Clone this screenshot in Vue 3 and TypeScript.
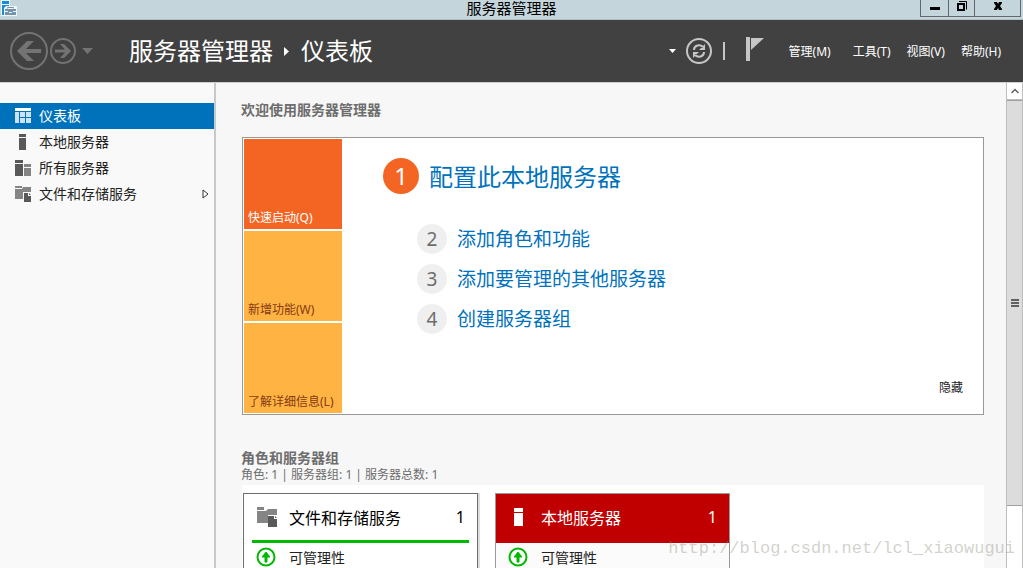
<script setup lang="ts">
import { ref } from 'vue'

interface NavItem {
  id: string
  label: string
  expandable?: boolean
}

const navItems: NavItem[] = [
  { id: 'dashboard', label: '仪表板' },
  { id: 'local', label: '本地服务器' },
  { id: 'all', label: '所有服务器' },
  { id: 'storage', label: '文件和存储服务', expandable: true },
]
const current = ref('dashboard')

const menus = ['管理(M)', '工具(T)', '视图(V)', '帮助(H)']

const tiles = ['快速启动(Q)', '新增功能(W)', '了解详细信息(L)']
const activeTile = ref(0)

const steps = ['配置此本地服务器', '添加角色和功能', '添加要管理的其他服务器', '创建服务器组']
const welcomeVisible = ref(true)

const groups = [
  { id: 'storage', name: '文件和存储服务', count: 1, alert: false },
  { id: 'local', name: '本地服务器', count: 1, alert: true },
]
</script>

<template>
  <div class="window">
    <div class="titlebar">
      <svg class="app-icon" width="18" height="18" viewBox="0 0 18 18" aria-hidden="true">
        <path d="M1 0h9v6h7v10H1z" fill="#eef6fa" />
        <path d="M2 1h7v3H2zM2 5h7v1H6L4 8v7H2z" fill="#1e8bd8" />
        <path d="M5 9h11v6H5z" fill="#7593aa" />
        <path d="M7.500 8.500v-1h6v1" fill="none" stroke="#7593aa" />
        <path d="M5 11.500h3M9 12.500h3M13 11.500h3" fill="none" stroke="#eef6fa" />
      </svg>
      <span class="window-title">服务器管理器</span>
      <div class="window-buttons">
        <button class="wb-min" type="button" aria-label="最小化">
          <svg width="12" height="14" viewBox="0 0 12 14"><path d="M1 7h10v3H1z" /></svg>
        </button>
        <button class="wb-max" type="button" aria-label="还原">
          <svg width="12" height="14" viewBox="0 0 12 14">
            <path d="M2 4h6v6H2z" fill="none" stroke="#000" stroke-width="2" />
            <path d="M3 1.500h7.500v8" fill="none" stroke="#000" />
          </svg>
        </button>
        <button class="wb-close" type="button" aria-label="关闭">
          <svg width="12" height="14" viewBox="0 0 12 14">
            <path d="M2 2h3l1 2 1-2h3v1L8 6l2 3v1H7L6 8l-1 2H2V9l2-3-2-3z" />
          </svg>
        </button>
      </div>
    </div>

    <header class="header">
      <button class="icon-button" type="button" aria-label="后退">
        <svg width="38" height="38" viewBox="0 0 38 38">
          <circle cx="19" cy="19" r="18" fill="none" stroke="#737373" stroke-width="2" />
          <path d="M7 19L17 9h7l-8 8h15v4H16l8 8h-7z" fill="#737373" />
        </svg>
      </button>
      <button class="icon-button forward" type="button" aria-label="前进">
        <svg width="26" height="26" viewBox="0 0 26 26">
          <circle cx="13" cy="13" r="12" fill="none" stroke="#737373" stroke-width="2" />
          <path d="M21 13l-7-7h-4l5 5.500H5v3h10L10 20h4z" fill="#737373" />
        </svg>
      </button>
      <button class="icon-button history" type="button" aria-label="历史记录">
        <svg width="11" height="7" viewBox="0 0 11 7"><path d="M0 0h11L5.500 6z" fill="#737373" /></svg>
      </button>
      <h1 class="crumbs">
        <span>服务器管理器</span>
        <svg width="6" height="9" viewBox="0 0 6 9" aria-hidden="true"><path d="M0 0l5 4.500L0 9z" fill="#fff" /></svg>
        <span>仪表板</span>
      </h1>
      <div class="tools">
        <button class="icon-button" type="button" aria-label="刷新选项">
          <svg width="7" height="4" viewBox="0 0 7 4"><path d="M0 0h7L3.500 4z" fill="#fff" /></svg>
        </button>
        <button class="icon-button refresh" type="button" aria-label="刷新">
          <svg width="26" height="26" viewBox="0 0 26 26">
            <circle cx="13" cy="13" r="12" fill="none" stroke="#c6c6c6" stroke-width="2" />
            <path d="M8 12c0-5 6-6 9-3M18 14c0 5-6 6-9 3" fill="none" stroke="#c6c6c6" stroke-width="2" />
            <path d="M19 6v6h-6l2-2h2V8zM7 20v-6h6l-2 2H9v2z" fill="#c6c6c6" />
          </svg>
        </button>
        <span class="divider"></span>
        <button class="icon-button flag" type="button" aria-label="通知">
          <svg width="18" height="24" viewBox="0 0 18 24">
            <path d="M0 0h4v24H0z" fill="#c6c6c6" />
            <path d="M5 1h13L5 13z" fill="#c6c6c6" />
          </svg>
        </button>
        <nav class="menus">
          <button v-for="menu in menus" :key="menu" type="button">{{ menu }}</button>
        </nav>
      </div>
    </header>

    <div class="body">
      <nav class="sidebar">
        <button
          v-for="item in navItems"
          :key="item.id"
          type="button"
          class="nav-item"
          :class="{ selected: item.id === current }"
          @click="current = item.id"
        >
          <svg width="16" height="16" viewBox="0 0 16 16" aria-hidden="true">
            <template v-if="item.id === 'dashboard'">
              <path d="M0 0h16v3H0z" fill="#fff" />
              <path d="M0 4h4v11H0zM5 4h5v5H5zM11 4h5v5h-5zM5 10h5v5H5zM11 10h5v5h-5z" fill="#cce3f5" />
            </template>
            <path v-else-if="item.id === 'local'" d="M4 0h7v3H4zM4 4h7v12H4z" fill="#595959" />
            <template v-else-if="item.id === 'all'">
              <path d="M0 0h8v3H0zM0 4h8v12H0z" fill="#595959" />
              <path d="M9 4h7v3H9zM9 8h7v8H9z" fill="#858585" />
            </template>
            <template v-else>
              <path d="M0 0h7v2H0zM0 3h7l1-2h8v5H8v7H0z" fill="#858585" />
              <path d="M9 7h4v3h3v6H9z" fill="#595959" />
              <path d="M14 7l2 2h-2z" fill="#595959" />
            </template>
          </svg>
          <span>{{ item.label }}</span>
          <svg v-if="item.expandable" class="expand" width="7" height="10" viewBox="0 0 7 10" aria-hidden="true">
            <path d="M1 1l5 4-5 4z" fill="#fff" stroke="#333" />
          </svg>
        </button>
      </nav>

      <main class="content">
        <h2>欢迎使用服务器管理器</h2>
        <section v-if="welcomeVisible" class="welcome">
          <div class="tiles">
            <button
              v-for="(tile, index) in tiles"
              :key="tile"
              type="button"
              class="tile"
              :class="{ active: index === activeTile }"
              @click="activeTile = index"
            >
              {{ tile }}
            </button>
          </div>
          <ol class="steps">
            <li v-for="(step, index) in steps" :key="step">
              <span class="number">{{ index + 1 }}</span>
              <a href="#">{{ step }}</a>
            </li>
          </ol>
          <button class="hide" type="button" @click="welcomeVisible = false">隐藏</button>
        </section>

        <h2 class="groups-title">角色和服务器组</h2>
        <p class="summary">角色: 1 | 服务器组: 1 | 服务器总数: 1</p>
        <section class="groups">
          <article v-for="group in groups" :key="group.id" class="card" :class="{ alert: group.alert }">
            <header class="card-head">
              <svg v-if="group.alert" width="22" height="20" viewBox="0 0 22 20" aria-hidden="true">
                <path d="M6 1h9v4H6zM6 6h9v13H6z" fill="#fff" />
              </svg>
              <svg v-else width="22" height="20" viewBox="0 0 22 20" aria-hidden="true">
                <path d="M1 0h7v3H1zM1 4h9l2-2h9v6h-9v8H1z" fill="#858585" />
                <path d="M12 9h6v3h3v8h-9z" fill="#595959" />
                <path d="M19 9l2 2h-2z" fill="#595959" />
              </svg>
              <h3>{{ group.name }}</h3>
              <span>{{ group.count }}</span>
            </header>
            <a class="card-row" href="#">
              <svg width="20" height="20" viewBox="0 0 20 20" aria-hidden="true">
                <circle cx="10" cy="10" r="8.500" fill="#fff" stroke="#00b900" stroke-width="2" />
                <path d="M10 5l4 5h-3v5H9v-5H6z" fill="#00b900" stroke="#00b900" />
              </svg>
              <span>可管理性</span>
            </a>
          </article>
        </section>
      </main>

      <div class="scrollbar" aria-hidden="true">
        <div class="scroll-up">
          <svg width="8" height="6" viewBox="0 0 8 6"><path d="M0.500 5L4 1.500 7.500 5" fill="none" stroke="#606060" stroke-width="1.500" /></svg>
        </div>
        <div class="thumb">
          <svg width="8" height="8" viewBox="0 0 8 8"><path d="M0 0h8v2H0zM0 3h8v2H0zM0 6h8v2H0z" fill="#606060" /></svg>
        </div>
        <div class="track"></div>
      </div>
    </div>
    <span class="watermark">http://blog.csdn.net/lcl_xiaowugui</span>
  </div>
</template>

<style>
body {
  margin: 0;
  overflow: hidden;
}
</style>

<style scoped>
.window {
  position: relative;
  display: flex;
  flex-direction: column;
  height: 100vh;
  overflow: hidden;
  background: #f7f7f7;
  color: #222;
  font-family: "Noto Sans", "Noto Sans CJK SC", sans-serif;
  font-size: 14px;
}
button {
  margin: 0;
  padding: 0;
  border: 0;
  background: none;
  color: inherit;
  font: inherit;
  text-align: left;
}
a {
  text-decoration: none;
}
h1, h2, h3, p, ol {
  margin: 0;
  padding: 0;
}
svg {
  display: block;
  flex: none;
}
.titlebar {
  display: grid;
  grid-template-columns: 1fr auto 1fr;
  box-sizing: border-box;
  height: 20px;
  flex: none;
  border-bottom: 1px solid #aebdc3;
  background: #c4d6dc;
}
.window-title {
  color: #000;
  font-family: "Liberation Sans", "Noto Sans CJK SC", sans-serif;
  font-size: 15px;
  line-height: 18px;
}
.window-buttons {
  display: flex;
  justify-self: end;
  box-sizing: border-box;
  height: 17px;
  margin-right: 2px;
  border: solid #65656d;
  border-width: 0 1px 1px;
}
.window-buttons button {
  display: flex;
  justify-content: center;
  width: 27px;
}
.window-buttons .wb-max {
  border: solid #65656d;
  border-width: 0 1px;
}
.window-buttons .wb-close {
  width: 45px;
}
.header {
  display: flex;
  align-items: center;
  box-sizing: border-box;
  height: 63px;
  flex: none;
  padding: 0 22px 0 10px;
  border-bottom: 1px solid #cfcfcf;
  background: #414141;
  color: #fff;
}
.forward {
  margin-left: 2px;
}
.history {
  margin-left: 6px;
}
.crumbs {
  display: flex;
  align-items: center;
  gap: 11px;
  margin-left: 36px;
  font-size: 24px;
  font-weight: 400;
  line-height: 32px;
}
.tools {
  display: flex;
  align-items: center;
  margin-left: auto;
}
.refresh {
  margin-left: 10px;
}
.divider {
  width: 2px;
  height: 18px;
  margin-left: 11px;
  background: #c6c6c6;
}
.flag {
  margin: 0 25px 4px 21px;
}
.menus {
  display: flex;
  gap: 16px;
  padding-top: 2px;
  font-size: 12px;
  line-height: 18px;
}
.menus button:first-child {
  margin-right: 6px;
}
.body {
  display: flex;
  flex: 1;
  min-height: 0;
}
.sidebar {
  width: 214px;
  flex: none;
  padding-top: 20px;
  border-right: 2px solid #c9c9c9;
  background: #f9f9f9;
}
.nav-item {
  display: flex;
  align-items: center;
  gap: 8px;
  width: 100%;
  height: 26px;
  padding: 0 5px 0 15px;
}
.nav-item span {
  padding-bottom: 2px;
}
.nav-item.selected {
  background: #0072bc;
  color: #fff;
}
.expand {
  margin-left: auto;
}
.content {
  flex: 1;
  min-width: 0;
  overflow: hidden;
  padding: 17px 22px 0 25px;
}
h2 {
  color: #6d6d6d;
  font-size: 14px;
  font-weight: 600;
  line-height: 20px;
}
.welcome {
  display: flex;
  margin: 17px 0 0 1px;
  padding: 1px;
  border: 1px solid #999;
  background: #fff;
}
.tiles {
  display: flex;
  flex-direction: column;
  gap: 2px;
  width: 98px;
}
.tile {
  display: flex;
  align-items: flex-end;
  box-sizing: border-box;
  height: 90px;
  padding: 0 4px 2px;
  background: #ffb343;
  color: #853a12;
  font-size: 12px;
  line-height: 18px;
  white-space: nowrap;
}
.tile.active {
  background: #f46524;
  color: #fff;
}
.steps {
  margin: 19px 0 0 75px;
  list-style: none;
}
.steps li {
  display: flex;
  align-items: center;
  gap: 10px;
  height: 30px;
  margin-bottom: 10px;
  font-size: 19px;
}
.steps li:first-child {
  height: 36px;
  margin: 0 0 30px -34px;
  font-size: 24px;
}
.steps a {
  padding-bottom: 2px;
  color: #0072bc;
}
.number {
  display: flex;
  align-items: center;
  justify-content: center;
  width: 30px;
  height: 30px;
  border-radius: 50%;
  background: #efefef;
  color: #6d6d6d;
}
li:first-child .number {
  box-sizing: border-box;
  width: 36px;
  height: 36px;
  padding-bottom: 2px;
  background: #f46524;
  color: #fff;
}
.hide {
  align-self: flex-end;
  margin: 0 19px 16px auto;
  font-size: 12px;
  line-height: 18px;
}
.groups-title {
  margin-top: 33px;
}
.summary {
  color: #6d6d6d;
  font-size: 12px;
  line-height: 14px;
}
.groups {
  display: flex;
  gap: 17px;
  margin: 3px 0 0 1px;
  padding: 8px 1px;
  background: #fff;
}
.card {
  box-sizing: border-box;
  width: 235px;
  height: 190px;
  border: 1px solid #6d6d6d;
  background: #fff;
  box-shadow: 2px 0 0 #ddd;
}
.card.alert {
  border-color: #999;
  background: #fbfbfb;
  box-shadow: none;
}
.card-head {
  display: flex;
  align-items: center;
  gap: 11px;
  box-sizing: border-box;
  height: 49px;
  margin: 0 8px;
  padding: 0 4px;
  border-bottom: 3px solid #00b900;
  color: #000;
  font-size: 16px;
}
.card.alert .card-head {
  margin: 0;
  padding: 0 12px;
  border-bottom-color: #c00000;
  background: #c00000;
  color: #fff;
}
.card-head h3 {
  flex: 1;
  font-size: 16px;
  font-weight: 400;
}
.card-row {
  display: flex;
  align-items: center;
  gap: 13px;
  height: 28px;
  padding-left: 12px;
  color: #222;
}
.scrollbar {
  display: flex;
  flex-direction: column;
  box-sizing: border-box;
  width: 17px;
  flex: none;
  border: solid #bdbdbd;
  border-width: 0 1px;
  background: #fff;
}
.scroll-up {
  display: flex;
  align-items: center;
  justify-content: center;
  height: 16px;
  border-bottom: 1px solid #bdbdbd;
}
.thumb {
  display: flex;
  flex: 13;
  align-items: center;
  justify-content: center;
  border: solid #a0a0a0;
  border-width: 1px 0;
  background: #dcdcdc;
}
.track {
  flex: 2;
}
.watermark {
  position: absolute;
  right: 8px;
  bottom: 8px;
  color: rgba(140, 140, 125, 0.4);
  font-family: "Liberation Mono", monospace;
  font-size: 17px;
  line-height: 22px;
  pointer-events: none;
}
</style>
